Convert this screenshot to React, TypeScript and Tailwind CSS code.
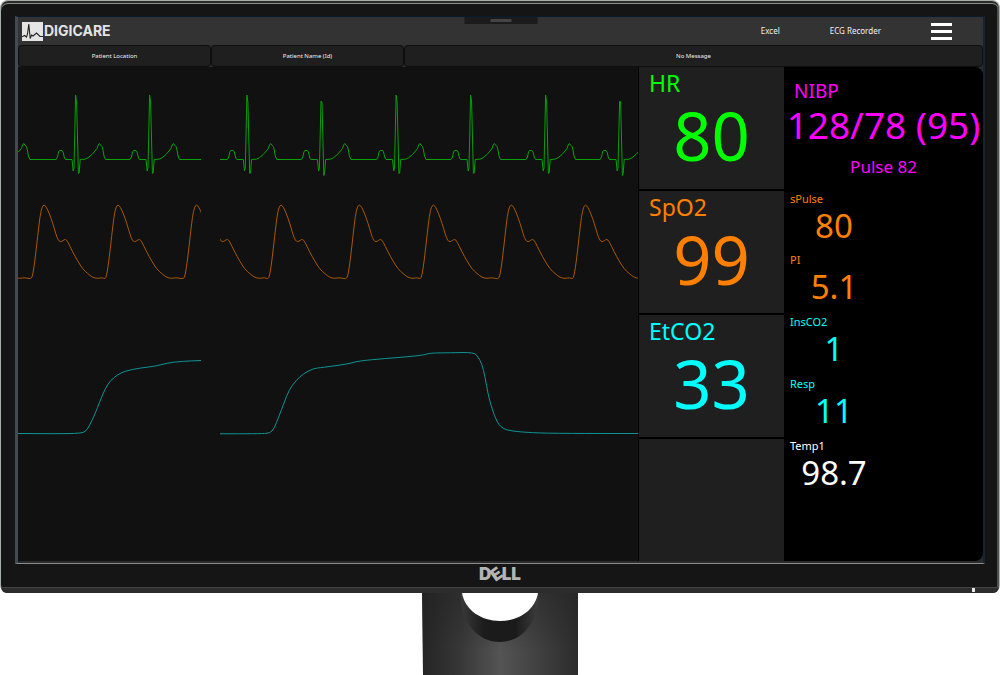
import React from "react";

type Point = [number, number];

const shift = (points: Point[], dx: number): Point[] => points.map(([x, y]) => [x + dx, y]);

const linePath = (points: Point[]) => "M" + points.map(([x, y]) => `${x} ${y}`).join("L");

const smoothPath = (points: Point[]) => {
  let d = `M${points[0][0]} ${points[0][1]}`;
  for (let i = 1; i < points.length - 1; i++) {
    const [x, y] = points[i];
    const [nx, ny] = points[i + 1];
    d += `Q${x} ${y} ${(x + nx) / 2} ${(y + ny) / 2}`;
  }
  const last = points[points.length - 1];
  return d + `L${last[0]} ${last[1]}`;
};

/* One heart beat, relative to its R peak. */
const beat = (peak: number, top: number): Point[] =>
  shift(
    [
      [-20, 159.5], [-18.5, 157], [-17.5, 152], [-16.5, 150.5], [-14, 150.5], [-13, 152], [-11.5, 158],
      [-10.5, 159.5], [-4, 159.5], [-2.8, 171], [-2, 168], [-0.4, top], [0.6, 102], [2.4, top > 98 ? 175.5 : 173.5],
      [3.2, 173], [4.2, 159.5], [9, 159.2], [12, 157.8], [16, 154.5], [19, 151], [21, 148.5], [22.2, 145], [23.4, 143.5],
      [24.5, 145], [26, 146.5], [27, 150], [28, 156], [29.5, 159.5],
    ],
    peak
  );

/* One pulse wave, relative to its systolic peak. */
const pulse = (peak: number): Point[] =>
  shift(
    [
      [-13, 279.2], [-11.3, 275.5], [-9, 260], [-6.3, 236], [-4, 216], [-2, 207], [0, 204.5], [2.3, 207], [5.3, 213.5],
      [8.7, 223], [12, 234.5], [14.3, 240.5], [16.7, 242], [19, 240.5], [21.5, 239], [23.7, 241.5], [28.7, 252],
      [33.7, 261], [38.7, 269], [43.7, 273.5], [48.7, 277.5], [53.7, 278.5], [58.7, 277.5],
    ],
    peak
  );

const ecgLeft = linePath([[18, 152], ...beat(0.4, 95).slice(19), ...beat(76, 95), ...beat(150, 95), [201, 159.5]]);
const ecgRight = linePath([
  [220, 159.5],
  ...beat(247.3, 95), ...beat(321.4, 101), ...beat(396.5, 95), ...beat(471, 95), ...beat(546, 95), ...beat(620, 101),
]);
const plethLeft = smoothPath([...pulse(-34), ...pulse(44), ...pulse(118), ...pulse(196.5)]);
const plethRight = smoothPath([
  ...pulse(206).slice(10), ...pulse(281), ...pulse(359.3), ...pulse(433.3), ...pulse(511.3), ...pulse(585.5),
]);

const co2Left = smoothPath([
  [18, 433.5], [60, 433.8], [80, 433.3], [86, 431.5], [90, 424.5], [95, 414], [100, 401], [105, 389], [110, 381],
  [117, 375], [125, 371], [140, 368], [157, 366], [167, 363], [182, 361.3], [201, 360.5],
]);
const co2Right = smoothPath([
  [220, 433.8], [262, 433.8], [270, 433], [274, 429], [279, 416], [284, 403], [289, 390], [296, 380.5], [303, 374],
  [313, 368.5], [322, 367.5], [348, 364], [358, 361], [385, 358.5], [405, 357], [424, 355], [430, 353], [450, 352.8],
  [474, 352.3], [478, 357], [482, 364], [485, 377], [488, 394], [492, 409], [497, 422], [501, 427], [506, 430],
  [520, 432], [545, 433.3], [600, 433.5], [638, 433.5],
]);

function Waveforms() {
  return (
    <svg
      className="block h-full w-full"
      viewBox="18 67 620 494"
      preserveAspectRatio="none"
      fill="none"
      role="img"
      aria-label="ECG, SpO2 and CO2 waveforms"
    >
      <defs>
        <clipPath id="sweep-new"><rect x="18" y="67" width="183" height="494" /></clipPath>
        <clipPath id="sweep-old"><rect x="220" y="67" width="418" height="494" /></clipPath>
      </defs>
      <g clipPath="url(#sweep-new)">
        <path d={ecgLeft} stroke="#07a007" />
        <path d={plethLeft} stroke="#a85808" />
        <path d={co2Left} stroke="#0c9494" />
      </g>
      <g clipPath="url(#sweep-old)">
        <path d={ecgRight} stroke="#07a007" />
        <path d={plethRight} stroke="#a85808" />
        <path d={co2Right} stroke="#0c9494" />
      </g>
    </svg>
  );
}

function Vital({ label, value, color }: { label: string; value: string; color: string }) {
  return (
    <section className={`bg-[#1f1f1f] px-2.5 pt-0.5 ${color}`}>
      <h2 className="text-[23px] leading-7">{label}</h2>
      <p className="text-center text-[67px] leading-19">{value}</p>
    </section>
  );
}

function SideVital({ label, value, color }: { label: string; value: string; color: string }) {
  return (
    <section className={`px-1.5 ${color}`}>
      <h3 className="text-[11px] leading-4">{label}</h3>
      <p className="w-22 text-center text-[33px] leading-9.5">{value}</p>
    </section>
  );
}

function Header() {
  return (
    <header className="relative flex h-7 items-center justify-between bg-[#333333] pl-1 pr-[31px]">
      <a href="#home" className="flex items-center text-[#e4e4e4]">
        <svg className="h-[19px] w-[21px]" viewBox="0 0 21 19" fill="none" aria-hidden="true">
          <rect width="21" height="19" fill="#e4e4e4" />
          <path
            d="M0 14.8L2.5 13.5L4.5 15L5.5 12L6.8 2L8.2 16.5L9.5 13L11 14L14.5 11L18 14.5H21"
            stroke="#222"
            strokeWidth="1.1"
          />
        </svg>
        <span className="pl-px font-[Inter] text-[14px] leading-5 font-bold">DIGICARE</span>
      </a>
      <div className="absolute left-1/2 top-0 flex h-[7px] w-[73px] -translate-x-1/2 justify-center bg-[#1b1b1b] pt-0.5">
        <div className="h-[3px] w-[21px] bg-[#444444]" />
      </div>
      <nav className="flex items-center text-[8px] leading-4 text-[#f0f0f0]">
        <button type="button" className="mr-12.5">Excel</button>
        <button type="button" className="mr-12.5">ECG Recorder</button>
        <button type="button" aria-label="Menu" className="flex w-[21px] flex-col gap-1">
          <span className="h-[3px] bg-white" />
          <span className="h-[3px] bg-white" />
          <span className="h-[3px] bg-white" />
        </button>
      </nav>
    </header>
  );
}

function InfoBar() {
  return (
    <div className="grid h-[22px] grid-cols-[1fr_1fr_3fr] bg-[#2b2b2b] text-center text-[6px] text-[#f0f0f0]">
      <button type="button" className="rounded-[4px] border border-[#0e0e0e] bg-[#1f1f1f]">Patient Location</button>
      <button type="button" className="rounded-[4px] border border-[#0e0e0e] bg-[#1f1f1f]">Patient Name (Id)</button>
      <p className="flex items-center justify-center rounded-[4px] border border-[#0e0e0e] bg-[#1f1f1f]">No Message</p>
    </div>
  );
}

function Stand() {
  return (
    <svg className="mx-auto block h-[83px] w-39" viewBox="0 0 156 83" aria-hidden="true">
      <defs>
        <linearGradient id="neck">
          <stop offset="0" stopColor="#242424" />
          <stop offset="0.25" stopColor="#383838" />
          <stop offset="0.5" stopColor="#545454" />
          <stop offset="0.75" stopColor="#404040" />
          <stop offset="1" stopColor="#2c2c2c" />
        </linearGradient>
        <linearGradient id="neck-shade" x2="0" y2="1">
          <stop offset="0" stopColor="#222" stopOpacity="0.5" />
          <stop offset="0.7" stopColor="#222" stopOpacity="0" />
        </linearGradient>
        <linearGradient id="hole">
          <stop offset="0" stopColor="#3a3a3a" />
          <stop offset="0.3" stopColor="#1c1c1c" />
          <stop offset="0.7" stopColor="#1a1a1a" />
          <stop offset="1" stopColor="#3c3c3c" />
        </linearGradient>
      </defs>
      <path d="M0 0H156V83H1Z" fill="url(#neck)" />
      <path d="M0 0H156V83H1Z" fill="url(#neck-shade)" />
      <path d="M39 0C37 26 54 49 78 49S118 26 116 0Z" fill="url(#hole)" />
      <path d="M40 0C43 17 59 28 78 28S113 17 116 0Z" fill="#fff" />
    </svg>
  );
}

export default function App() {
  return (
    <main className="min-h-screen bg-white font-['Noto_Sans',sans-serif]">
      <div className="rounded-lg border border-b-0 border-[#a9b0a9] bg-[#151515] shadow-[inset_0_2px_0_#2a2a2a,inset_0_3px_0_#8a8c8a,inset_-2px_0_0_#505050]">
        <div className="px-3.5 pt-[15px]">
          <div className="border-b border-l-3 border-r-2 border-t border-b-[#8c8c8c] border-l-[#454a52] border-r-[#152330] border-t-[#0a1a2c] bg-[#2b2b2b] pb-0.5">
            <Header />
            <InfoBar />
            <div className="grid min-h-[494px] grid-cols-[1fr_146px_199px] overflow-hidden rounded-r-lg bg-black">
              <div className="relative bg-[#111111]">
                <div className="absolute inset-0">
                  <Waveforms />
                </div>
              </div>
              <div className="grid grid-rows-4 gap-0.5 border-l border-black">
                <Vital label="HR" value="80" color="text-[#00ff00]" />
                <Vital label="SpO2" value="99" color="text-[#ff8000]" />
                <Vital label="EtCO2" value="33" color="text-[#00ffff]" />
                <section className="bg-[#1f1f1f]" aria-label="Empty channel" />
              </div>
              <div className="grid grid-rows-8">
                <section className="row-span-2 text-[#ff00ff]">
                  <h2 className="px-2.5 pt-2.5 text-[19px] leading-7">NIBP</h2>
                  <p className="text-center text-[37px] leading-10 whitespace-nowrap">128/78 (95)</p>
                  <p className="pt-2 text-center text-[17px] leading-7">Pulse 82</p>
                </section>
                <SideVital label="sPulse" value="80" color="text-[#ff8000]" />
                <SideVital label="PI" value="5.1" color="text-[#ff8000]" />
                <SideVital label="InsCO2" value="1" color="text-[#00ffff]" />
                <SideVital label="Resp" value="11" color="text-[#00ffff]" />
                <SideVital label="Temp1" value="98.7" color="text-white" />
              </div>
            </div>
          </div>
        </div>
        <div className="flex h-[23px] items-start justify-center pt-0.5 font-[Inter] text-[17px] leading-4 font-black text-[#b4b4b4]">
          <span>D</span>
          <span className="-rotate-35">E</span>
          <span>LL</span>
        </div>
        <div className="flex h-[6px] justify-end rounded-b-lg border-t border-[#444444] bg-[#2c2c2c] pr-6">
          <span className="h-1 w-[3px] bg-[#e8e8e8]" />
        </div>
      </div>
      <Stand />
    </main>
  );
}
